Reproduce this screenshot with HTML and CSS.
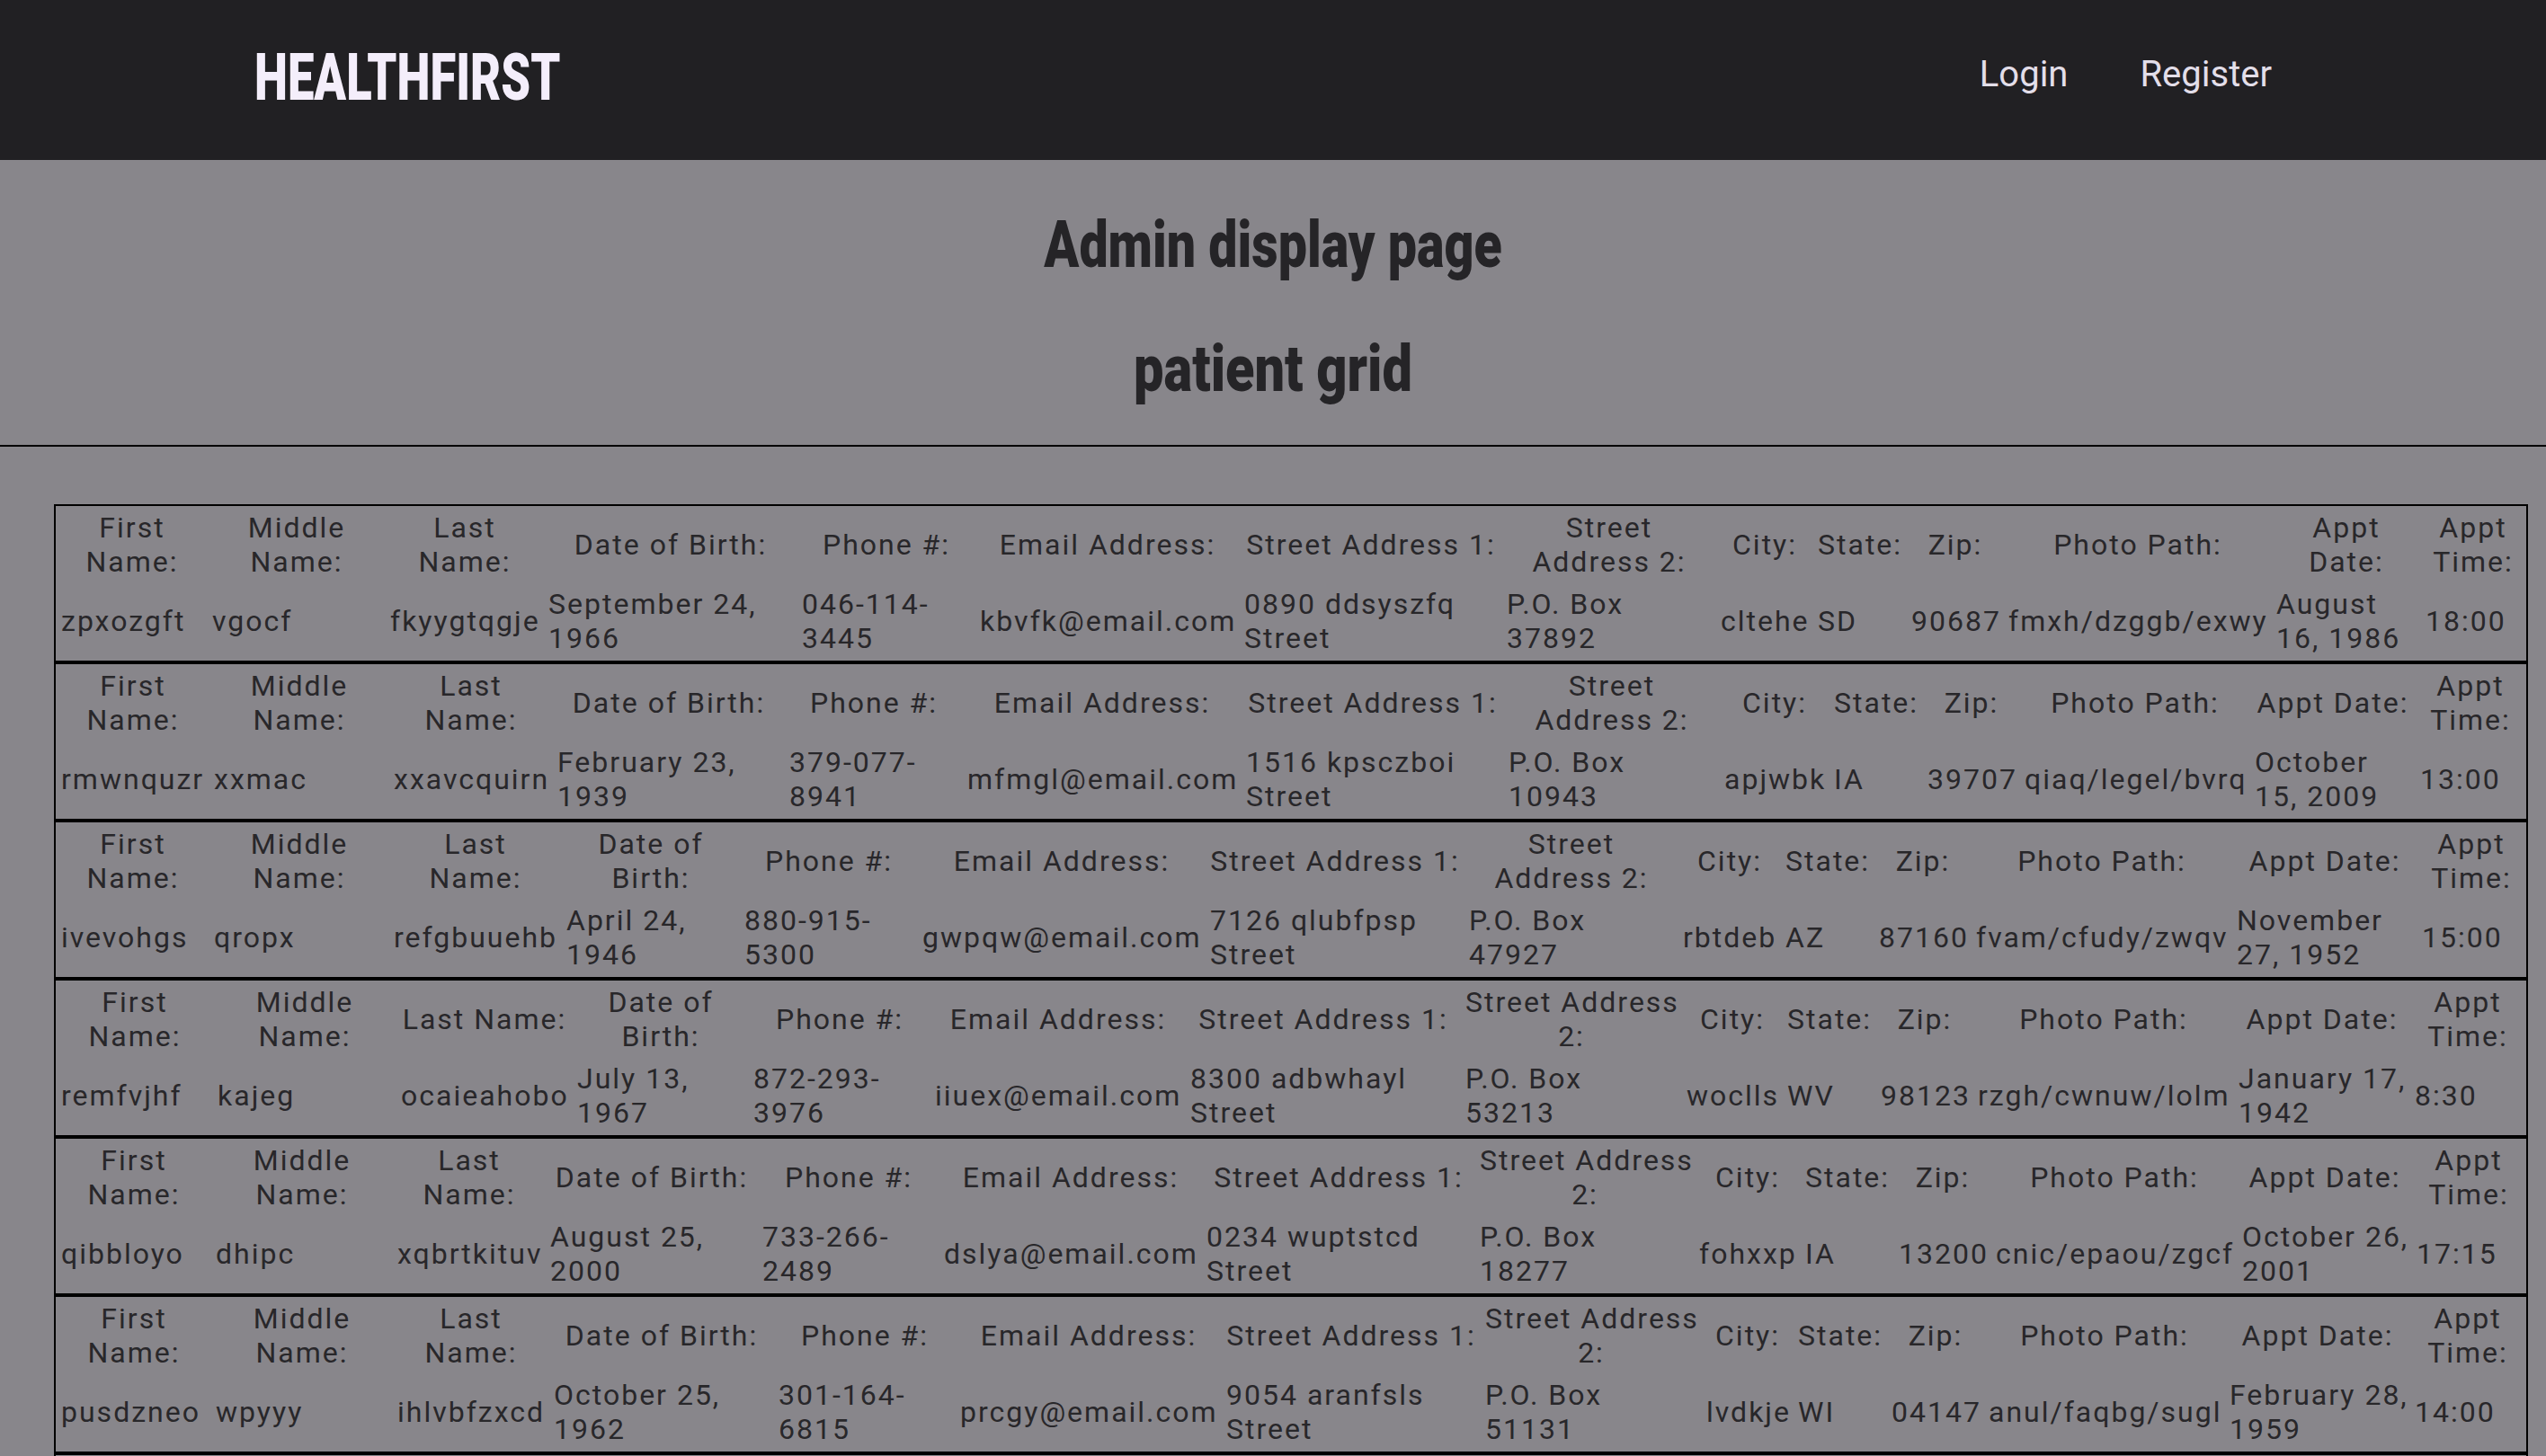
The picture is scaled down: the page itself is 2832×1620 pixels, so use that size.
FILE: index.html
```html
<!DOCTYPE html>
<html lang="en">
<head>
<meta charset="utf-8">
<title>HealthFirst - Admin</title>
<link rel="stylesheet" href="styles.css">
</head>
<body>
<header class="site-header">
  <a class="logo" href="#">HEALTHFIRST</a>
  <nav class="nav">
    <a class="nav-link" href="#">Login</a>
    <a class="nav-link" href="#">Register</a>
  </nav>
</header>
<main>
  <section class="intro">
    <h1 class="title">Admin display page</h1>
    <h2 class="title title--sub">patient grid</h2>
  </section>
  <div class="grid">
    <table class="patient">
      <tr><th>First Name:</th><th>Middle Name:</th><th>Last Name:</th><th>Date of Birth:</th><th>Phone #:</th><th>Email Address:</th><th>Street Address 1:</th><th>Street Address 2:</th><th>City:</th><th>State:</th><th>Zip:</th><th>Photo Path:</th><th>Appt Date:</th><th>Appt Time:</th></tr>
      <tr><td>zpxozgft</td><td>vgocf</td><td>fkyygtqgje</td><td>September 24, 1966</td><td>046-114-3445</td><td>kbvfk@email.com</td><td>0890 ddsyszfq Street</td><td>P.O. Box 37892</td><td>cltehe</td><td>SD</td><td>90687</td><td>fmxh/dzggb/exwy</td><td>August 16, 1986</td><td>18:00</td></tr>
    </table>
    <table class="patient">
      <tr><th>First Name:</th><th>Middle Name:</th><th>Last Name:</th><th>Date of Birth:</th><th>Phone #:</th><th>Email Address:</th><th>Street Address 1:</th><th>Street Address 2:</th><th>City:</th><th>State:</th><th>Zip:</th><th>Photo Path:</th><th>Appt Date:</th><th>Appt Time:</th></tr>
      <tr><td>rmwnquzr</td><td>xxmac</td><td>xxavcquirn</td><td>February 23, 1939</td><td>379-077-8941</td><td>mfmgl@email.com</td><td>1516 kpsczboi Street</td><td>P.O. Box 10943</td><td>apjwbk</td><td>IA</td><td>39707</td><td>qiaq/legel/bvrq</td><td>October 15, 2009</td><td>13:00</td></tr>
    </table>
    <table class="patient">
      <tr><th>First Name:</th><th>Middle Name:</th><th>Last Name:</th><th>Date of Birth:</th><th>Phone #:</th><th>Email Address:</th><th>Street Address 1:</th><th>Street Address 2:</th><th>City:</th><th>State:</th><th>Zip:</th><th>Photo Path:</th><th>Appt Date:</th><th>Appt Time:</th></tr>
      <tr><td>ivevohgs</td><td>qropx</td><td>refgbuuehb</td><td>April 24, 1946</td><td>880-915-5300</td><td>gwpqw@email.com</td><td>7126 qlubfpsp Street</td><td>P.O. Box 47927</td><td>rbtdeb</td><td>AZ</td><td>87160</td><td>fvam/cfudy/zwqv</td><td>November 27, 1952</td><td>15:00</td></tr>
    </table>
    <table class="patient">
      <tr><th>First Name:</th><th>Middle Name:</th><th>Last Name:</th><th>Date of Birth:</th><th>Phone #:</th><th>Email Address:</th><th>Street Address 1:</th><th><span class="keep">Street Address</span> 2:</th><th>City:</th><th>State:</th><th>Zip:</th><th>Photo Path:</th><th>Appt Date:</th><th>Appt Time:</th></tr>
      <tr><td>remfvjhf</td><td>kajeg</td><td>ocaieahobo</td><td>July 13, 1967</td><td>872-293-3976</td><td>iiuex@email.com</td><td>8300 adbwhayl Street</td><td>P.O. Box 53213</td><td>woclls</td><td>WV</td><td>98123</td><td>rzgh/cwnuw/lolm</td><td><span class="keep">January 17,</span> 1942</td><td>8:30</td></tr>
    </table>
    <table class="patient">
      <tr><th>First Name:</th><th>Middle Name:</th><th>Last Name:</th><th>Date of Birth:</th><th>Phone #:</th><th>Email Address:</th><th>Street Address 1:</th><th><span class="keep">Street Address</span> 2:</th><th>City:</th><th>State:</th><th>Zip:</th><th>Photo Path:</th><th>Appt Date:</th><th>Appt Time:</th></tr>
      <tr><td>qibbloyo</td><td>dhipc</td><td>xqbrtkituv</td><td>August 25, 2000</td><td>733-266-2489</td><td>dslya@email.com</td><td>0234 wuptstcd Street</td><td>P.O. Box 18277</td><td>fohxxp</td><td>IA</td><td>13200</td><td>cnic/epaou/zgcf</td><td><span class="keep">October 26,</span> 2001</td><td>17:15</td></tr>
    </table>
    <table class="patient">
      <tr><th>First Name:</th><th>Middle Name:</th><th>Last Name:</th><th>Date of Birth:</th><th>Phone #:</th><th>Email Address:</th><th>Street Address 1:</th><th><span class="keep">Street Address</span> 2:</th><th>City:</th><th>State:</th><th>Zip:</th><th>Photo Path:</th><th>Appt Date:</th><th>Appt Time:</th></tr>
      <tr><td>pusdzneo</td><td>wpyyy</td><td>ihlvbfzxcd</td><td>October 25, 1962</td><td>301-164-6815</td><td>prcgy@email.com</td><td>9054 aranfsls Street</td><td>P.O. Box 51131</td><td>lvdkje</td><td>WI</td><td>04147</td><td>anul/faqbg/sugl</td><td><span class="keep">February 28,</span> 1959</td><td>14:00</td></tr>
    </table>
    <table class="patient">
      <tr><th>First Name:</th><th>Middle Name:</th><th>Last Name:</th><th>Date of Birth:</th><th>Phone #:</th><th>Email Address:</th><th>Street Address 1:</th><th>Street Address 2:</th><th>City:</th><th>State:</th><th>Zip:</th><th>Photo Path:</th><th>Appt Date:</th><th>Appt Time:</th></tr>
      <tr><td>hwtkoyex</td><td>mrbne</td><td>jadfsqlwop</td><td>March 3, 1971</td><td>512-806-4437</td><td>tvzkn@email.com</td><td>4471 gemrtbqa Street</td><td>P.O. Box 60218</td><td>kqpavo</td><td>OH</td><td>55302</td><td>kzlo/rutve/hwdn</td><td>June 12, 1995</td><td>9:45</td></tr>
    </table>
  </div>
</main>
<script src="script.js"></script>
</body>
</html>
```

FILE: styles.css
```css
* {
  box-sizing: border-box;
}

body {
  margin: 0;
  background: #88868b;
  color: #28272a;
  font-family: Roboto, "Liberation Sans", Arial, sans-serif;
}

.site-header {
  height: 178px;
  background: #212023;
  display: flex;
  justify-content: space-between;
  align-items: flex-start;
  padding: 0 283px;
}

.logo {
  display: inline-block;
  margin-top: 49.5px;
  font-size: 73px;
  line-height: 73px;
  font-weight: 900;
  color: #f4eefb;
  text-decoration: none;
  transform: scaleX(0.72);
  transform-origin: left center;
}

.nav {
  display: flex;
  gap: 80px;
  margin-top: 58.6px;
  padding-right: 22px;
}

.nav-link {
  font-size: 40px;
  color: #e3dee9;
  text-decoration: none;
}

.intro {
  padding: 46.5px 0 37.5px;
  border-bottom: 2px solid #000;
}

.title {
  margin: 0;
  font-size: 73px;
  line-height: 95px;
  font-weight: 900;
  text-align: center;
  color: #252427;
  transform: scaleX(0.785);
}

.title + .title {
  margin-top: 43px;
}

.title--sub {
  transform: scaleX(0.815);
}

.grid {
  margin: 64px 20px 0 60px;
}

.patient {
  width: 100%;
  border: 2px solid #000;
  border-spacing: 2px;
  font-size: 32px;
  line-height: 37.5px;
  letter-spacing: 2px;
  color: #28272a;
}

.patient th,
.patient td {
  padding: 4px;
  font-weight: 400;
}

.patient.is-max {
  width: auto;
}

.patient.is-max th,
.patient.is-max td {
  white-space: nowrap;
}

.patient.is-min {
  width: 1px;
}

.patient.is-fixed {
  table-layout: fixed;
}

.patient.is-fixed .keep {
  white-space: nowrap;
}
```

FILE: script.js
```js
(function () {
  // The page was designed at a 2x pixel ratio: column widths are worked out
  // in whole CSS pixels of that design (UNIT device pixels each).
  var UNIT = 2;

  function cellWidths(table, n) {
    var rows = table.rows;
    var out = [];
    for (var i = 0; i < n; i++) {
      var m = 0;
      for (var r = 0; r < rows.length; r++) {
        var c = rows[r].cells[i];
        if (c) m = Math.max(m, c.getBoundingClientRect().width);
      }
      out.push(Math.floor(m / UNIT + 0.001));
    }
    return out;
  }

  function layout(table) {
    var rows = table.rows;
    var n = rows[0].cells.length;
    var cs = getComputedStyle(table);
    var spacing = parseFloat(cs.borderSpacing) || 0;
    var border = parseFloat(cs.borderLeftWidth) + parseFloat(cs.borderRightWidth);
    var total = table.getBoundingClientRect().width;
    var available = Math.floor((total - border - spacing * (n + 1)) / UNIT);

    table.classList.add('is-max');
    var maxW = cellWidths(table, n);
    table.classList.remove('is-max');

    table.classList.add('is-min');
    var minW = cellWidths(table, n);
    table.classList.remove('is-min');

    var widths = minW.slice();
    var avail = available;
    var totalAuto = 0;
    var allocAuto = 0;
    var i;
    for (i = 0; i < n; i++) {
      if (maxW[i] < minW[i]) maxW[i] = minW[i];
      avail -= minW[i];
      totalAuto += maxW[i];
      allocAuto += minW[i];
    }

    if (avail > 0) {
      avail += allocAuto;
      for (i = 0; i < n; i++) {
        var w = Math.max(minW[i], Math.floor(avail * maxW[i] / totalAuto));
        avail -= w;
        totalAuto -= maxW[i];
        widths[i] = w;
      }
    }

    if (avail < 0) {
      var beyond = 0;
      for (i = 0; i < n; i++) beyond += widths[i] - minW[i];
      for (i = n - 1; i >= 0 && beyond > 0; i--) {
        var diff = widths[i] - minW[i];
        var reduce = Math.trunc(avail * diff / beyond);
        widths[i] += reduce;
        avail -= reduce;
        beyond -= diff;
        if (avail >= 0) break;
      }
    }

    if (avail > 0) {
      var left = n;
      for (i = n - 1; i >= 0; i--) {
        var add = Math.floor(avail / left);
        widths[i] += add;
        avail -= add;
        left--;
      }
    }

    table.classList.add('is-fixed');
    for (i = 0; i < n; i++) {
      rows[0].cells[i].style.width = (widths[i] * UNIT) + 'px';
    }
  }

  var tables = document.querySelectorAll('.patient');
  for (var t = 0; t < tables.length; t++) layout(tables[t]);
})();
```
